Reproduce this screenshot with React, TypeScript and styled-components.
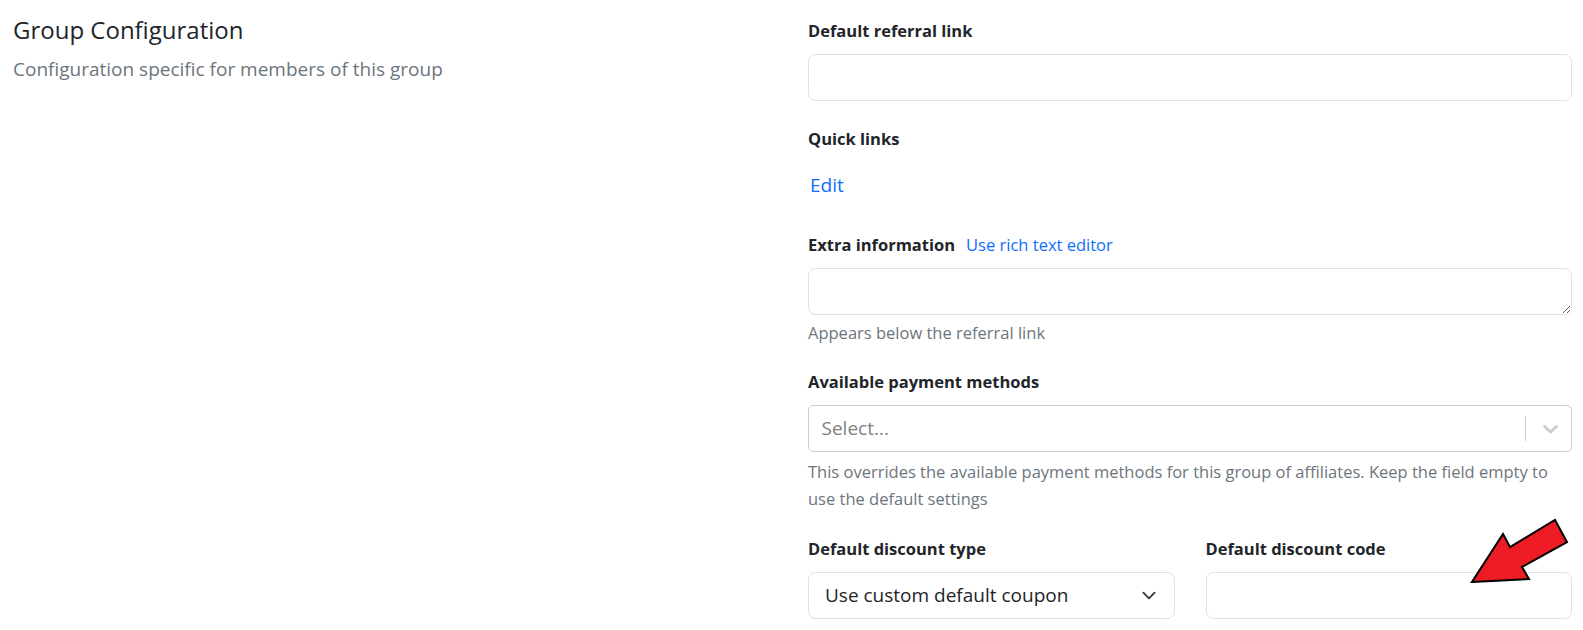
import * as React from "react";
import styled, { createGlobalStyle } from "styled-components";

const GlobalStyle = createGlobalStyle`
  body {
    margin: 0;
    background: #ffffff;
    color: #212529;
    font-family: "Open Sans", "Noto Sans", sans-serif;
    font-size: 20px;
    line-height: 1.5;
  }
  * {
    box-sizing: border-box;
  }
`;

const Page = styled.div`
  position: relative;
  display: grid;
  grid-template-columns: 1fr 1fr;
  column-gap: 31px;
  padding: 16px 11px 0 13px;
  width: 1583px;
  height: 630px;
  overflow: hidden;
`;

const Intro = styled.div`
  display: flex;
  flex-direction: column;
`;

const Title = styled.h5`
  margin: 0 0 10px;
  font-size: 24px;
  font-weight: 400;
  line-height: 1.2;
`;

const Subtitle = styled.p`
  margin: 0;
  font-size: 19px;
  color: #6c757d;
`;

const Form = styled.div`
  display: flex;
  flex-direction: column;
  padding-top: 2px;
`;

const Field = styled.div<{ $gap?: number }>`
  display: flex;
  flex-direction: column;
  margin-bottom: ${(p) => (p.$gap ?? 25)}px;
`;

const LabelRow = styled.div`
  display: flex;
  align-items: baseline;
  margin-bottom: 10px;
`;

const Label = styled.label`
  font-size: 16.5px;
  font-weight: 700;
  line-height: 26px;
`;

const InlineLink = styled.a`
  margin-left: 11px;
  font-size: 16.5px;
  color: #0d6efd;
  text-decoration: none;
  cursor: pointer;
`;

const TextInput = styled.input`
  height: 47px;
  width: 100%;
  padding: 7px 15px;
  border: 1px solid #dee2e6;
  border-radius: 7.5px;
  font: inherit;
  color: #212529;
  outline: none;
`;

const TextArea = styled.textarea`
  display: block;
  height: 47px;
  width: 100%;
  padding: 7px 15px;
  border: 1px solid #dee2e6;
  border-radius: 7.5px;
  font: inherit;
  color: #212529;
  resize: vertical;
  outline: none;
`;

const HelpText = styled.div<{ $top?: number }>`
  margin-top: ${(p) => (p.$top ?? 4)}px;
  font-size: 16.5px;
  line-height: 27px;
  color: #6c757d;
`;

const LinkButton = styled.button`
  align-self: flex-start;
  margin-left: 2px;
  padding: 9px 0 8px;
  border: 0;
  background: none;
  font: inherit;
  font-size: 19px;
  color: #0d6efd;
  cursor: pointer;
`;

const ReactSelectControl = styled.div`
  display: flex;
  align-items: center;
  height: 47px;
  border: 1px solid #cccccc;
  border-radius: 5px;
  background: #ffffff;
`;

const Placeholder = styled.div`
  flex: 1;
  padding: 0 12.5px;
  font-size: 19px;
  color: #808080;
`;

const Separator = styled.span`
  align-self: stretch;
  width: 1px;
  margin: 10px 0;
  background: #cccccc;
`;

const Indicator = styled.div`
  display: flex;
  padding: 10px 8px 10px 12px;
  color: #cccccc;
`;

const SplitRow = styled.div`
  display: grid;
  grid-template-columns: 1fr 1fr;
  column-gap: 31px;
`;

const NativeSelect = styled.div`
  display: flex;
  align-items: center;
  justify-content: space-between;
  height: 47px;
  padding: 0 15px 0 16px;
  border: 1px solid #dee2e6;
  border-radius: 7.5px;
  font-size: 19px;
  color: #212529;
`;

const Pointer = styled.svg`
  position: absolute;
  left: 1463px;
  top: 513px;
  width: 112px;
  height: 78px;
`;

const ReactSelectChevron = () => (
  <svg width="25" height="25" viewBox="0 0 20 20" fill="currentColor">
    <path d="M4.516 7.548c0.436-0.446 1.043-0.481 1.576 0l3.908 3.747 3.908-3.747c0.533-0.481 1.141-0.446 1.574 0 0.436 0.445 0.408 1.197 0 1.615-0.406 0.418-4.695 4.502-4.695 4.502-0.217 0.223-0.502 0.335-0.787 0.335s-0.57-0.112-0.789-0.335c0 0-4.287-4.084-4.695-4.502s-0.436-1.17 0-1.615z" />
  </svg>
);

const SelectChevron = () => (
  <svg width="20" height="15" viewBox="0 0 16 16" fill="none">
    <path
      d="m2 5 6 6 6-6"
      stroke="#343a40"
      strokeWidth="2"
      strokeLinecap="round"
      strokeLinejoin="round"
    />
  </svg>
);

export default function App() {
  return (
    <>
      <GlobalStyle />
      <Page>
        <Intro>
          <Title>Group Configuration</Title>
          <Subtitle>Configuration specific for members of this group</Subtitle>
        </Intro>

        <Form>
          <Field>
            <LabelRow>
              <Label>Default referral link</Label>
            </LabelRow>
            <TextInput type="text" />
          </Field>

          <Field $gap={24}>
            <LabelRow>
              <Label>Quick links</Label>
            </LabelRow>
            <LinkButton>Edit</LinkButton>
          </Field>

          <Field $gap={23}>
            <LabelRow>
              <Label>Extra information</Label>
              <InlineLink>Use rich text editor</InlineLink>
            </LabelRow>
            <TextArea rows={1} />
            <HelpText>Appears below the referral link</HelpText>
          </Field>

          <Field $gap={24}>
            <LabelRow>
              <Label>Available payment methods</Label>
            </LabelRow>
            <ReactSelectControl>
              <Placeholder>Select...</Placeholder>
              <Separator />
              <Indicator>
                <ReactSelectChevron />
              </Indicator>
            </ReactSelectControl>
            <HelpText $top={6}>
              This overrides the available payment methods for this group of
              affiliates. Keep the field empty to use the default settings
            </HelpText>
          </Field>

          <SplitRow>
            <Field $gap={0}>
              <LabelRow>
                <Label>Default discount type</Label>
              </LabelRow>
              <NativeSelect>
                <span>Use custom default coupon</span>
                <SelectChevron />
              </NativeSelect>
            </Field>
            <Field $gap={0}>
              <LabelRow>
                <Label>Default discount code</Label>
              </LabelRow>
              <TextInput type="text" />
            </Field>
          </SplitRow>
        </Form>

        <Pointer viewBox="0 0 112 78">
          <polygon
            points="9,69 66,66 59,54 104,29 92,7 47,34 40,21"
            fill="#ed1c24"
            stroke="#000000"
            strokeWidth="2"
            strokeLinejoin="miter"
          />
        </Pointer>
      </Page>
    </>
  );
}
